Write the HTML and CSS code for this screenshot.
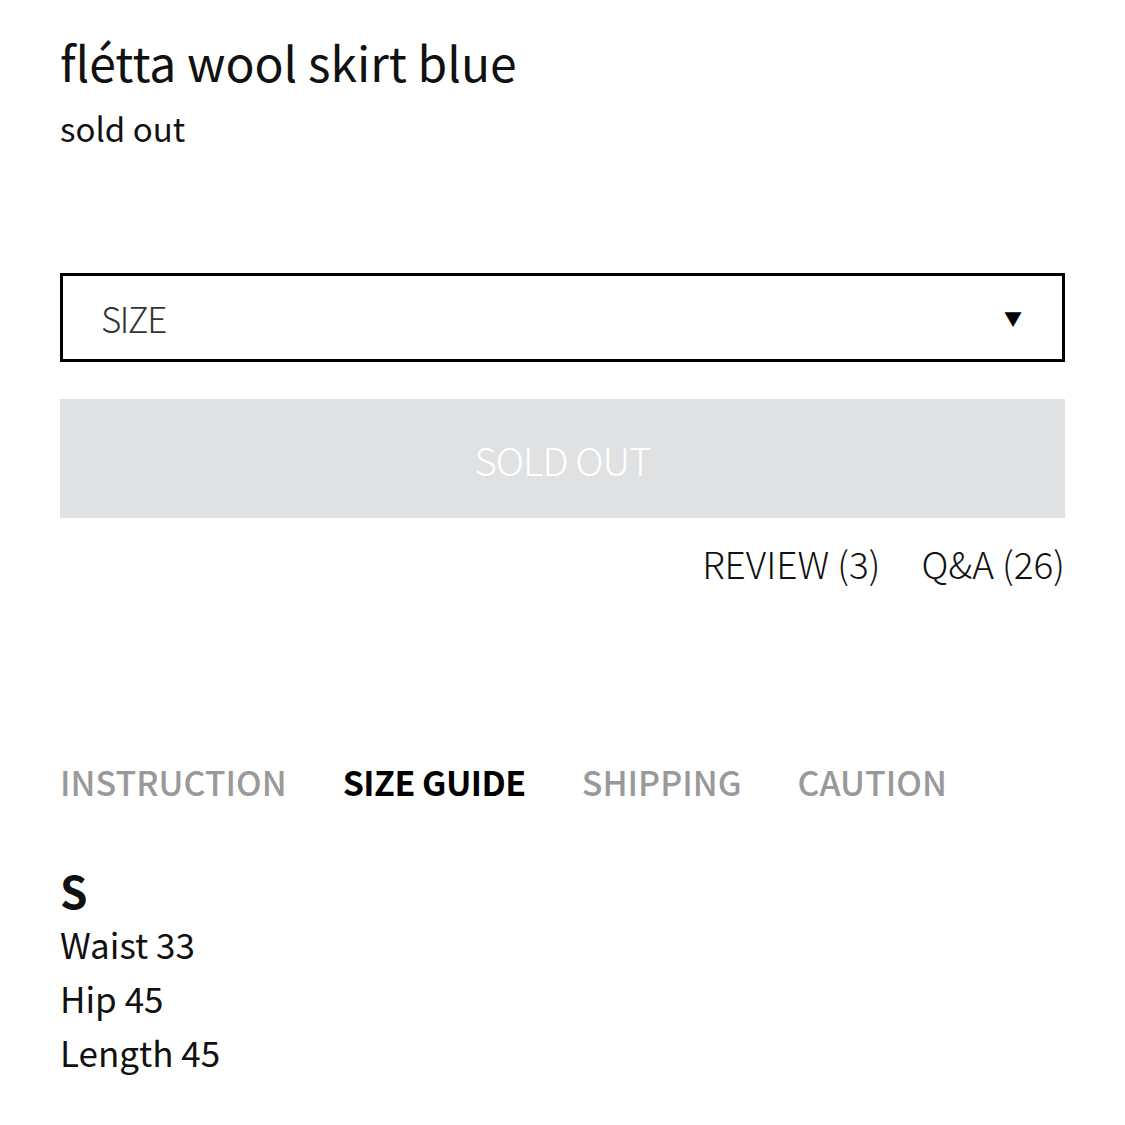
FILE: index.html
```html
<!DOCTYPE html>
<html lang="en">
<head>
  <meta charset="UTF-8">
  <title>flétta wool skirt blue</title>
  <link rel="stylesheet" href="styles.css">
</head>
<body>

  <div class="product">
    <h1 class="name">flétta wool skirt blue</h1>
    <p class="price">sold out</p>

    <div class="select">
      <span>SIZE</span>
      <span class="arrow">&#9660;</span>
    </div>

    <button class="buy" disabled>SOLD OUT</button>

    <div class="links">
      <a href="#">REVIEW (3)</a>
      <a href="#">Q&amp;A (26)</a>
    </div>

    <!-- detail tabs -->
    <ul class="tabs">
      <li>INSTRUCTION</li>
      <li class="on">SIZE GUIDE</li>
      <li>SHIPPING</li>
      <li>CAUTION</li>
    </ul>

    <div class="size-info">
      <h4>S</h4>
      <p>Waist 33</p>
      <p>Hip 45</p>
      <p>Length 45</p>
    </div>
  </div>

</body>
</html>
```

FILE: styles.css
```css
body {
  margin: 0;
  font-family: "Noto Sans CJK KR", "Noto Sans", sans-serif;
  color: #111;
  background: #fff;
}
.product {
  padding: 25px 60px 40px 60px;
}
.name {
  margin: 0;
  font-size: 48px;
  font-weight: 400;
  line-height: 72px;
}
.price {
  margin: 0;
  font-size: 33px;
  line-height: 62px;
}
.select {
  margin-top: 114px;
  height: 83px;
  border: 3px solid #000;
  display: flex;
  align-items: center;
  justify-content: space-between;
  padding: 0 40px 0 38px;
  font-size: 35px;
  font-weight: 300;
  letter-spacing: -1.5px;
  color: #333;
}
.arrow {
  font-size: 18px;
  color: #000;
  letter-spacing: 0;
}
.buy {
  display: block;
  width: 100%;
  height: 119px;
  margin-top: 37px;
  border: 0;
  background: #dfe1e3;
  color: #fff;
  font-family: inherit;
  font-size: 39px;
  font-weight: 300;
  letter-spacing: -1px;
}
.links {
  display: flex;
  justify-content: flex-end;
  gap: 41px;
  margin-top: 18px;
}
.links a {
  font-size: 37px;
  font-weight: 300;
  color: #111;
  text-decoration: none;
}
.tabs {
  list-style: none;
  margin: 167px 0 0 0;
  padding: 0;
  display: flex;
  gap: 56px;
}
.tabs li {
  font-size: 34px;
  font-weight: 500;
  color: #999;
}
.tabs li.on {
  color: #000;
  font-weight: 700;
  letter-spacing: -0.5px;
}
.size-info {
  margin-top: 57px;
}
.size-info h4 {
  margin: 0;
  font-size: 44px;
  font-weight: 700;
  line-height: 54px;
}
.size-info p {
  margin: 0;
  font-size: 35px;
  line-height: 54px;
}
```
